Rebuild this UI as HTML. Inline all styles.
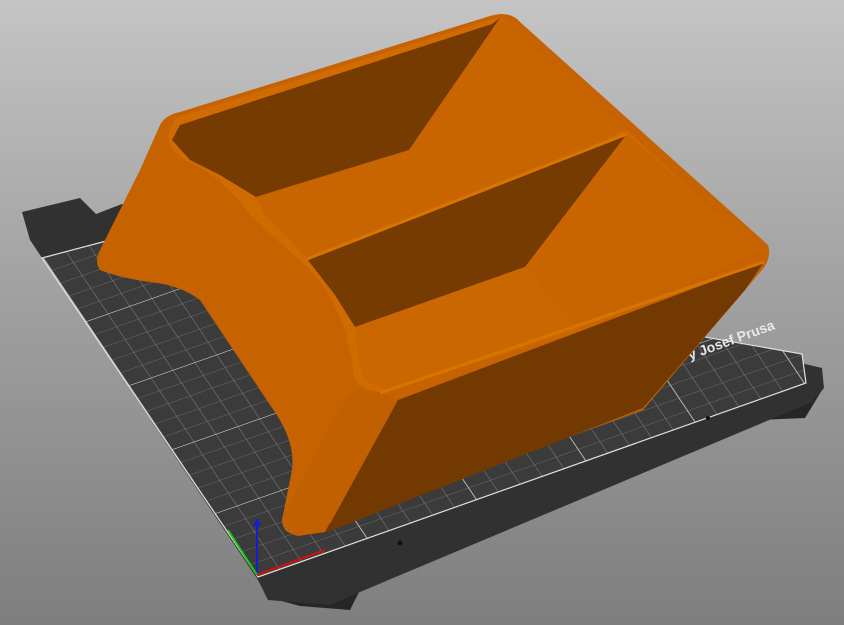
<!DOCTYPE html>
<html><head><meta charset="utf-8"><style>
html,body{margin:0;padding:0;width:844px;height:625px;overflow:hidden;}
body{background:linear-gradient(#c4c4c4,#a2a2a2 45%,#7e7e7e);}
svg{display:block}
</style></head><body>
<svg width="844" height="625" viewBox="0 0 844 625" xmlns="http://www.w3.org/2000/svg">
<defs>
<pattern id="g" width="10" height="10" patternUnits="userSpaceOnUse" patternTransform="matrix(2.19,-0.77,-0.86,-1.28,258,578)">
<rect width="10" height="10" fill="#3b3b3b"/>
<path d="M0 0H10M0 0V10" stroke="#7a7a7a" stroke-width="0.5" fill="none"/>
</pattern>
<pattern id="g2" width="50" height="50" patternUnits="userSpaceOnUse" patternTransform="matrix(2.19,-0.77,-0.86,-1.28,258,578)">
<path d="M0 0H50M0 0V50" stroke="#dcdcdc" stroke-width="0.6" fill="none"/>
</pattern>
</defs>
<polygon points="258,575 270,598 300,606 350,610 360,590" fill="#262626"/>
<polygon points="740,400 760,420 805,418 822,390 800,380" fill="#262626"/>
<polygon points="22,212 80,198 96,214 122,204 822,368 824,388 812,402 360,592 330,605 268,600 258,580 30,240" fill="#313131"/>
<polygon points="42,258 125,236 802,354 806,383 258,577" fill="url(#g)"/>
<polygon points="42,258 125,236 802,354 806,383 258,577" fill="url(#g2)"/>
<polygon points="42,258 125,236 802,354 806,383 258,577" fill="none" stroke="#e0e0e0" stroke-width="1.2"/>
<text x="690" y="360" font-family="Liberation Sans, sans-serif" font-weight="bold" font-size="14" fill="#e8e8e8" transform="rotate(-20 690 360)">y Josef Prusa</text>
<text x="690" y="343" font-family="Liberation Sans, sans-serif" font-weight="bold" font-size="14" fill="#e06a10" transform="rotate(-20 690 343)">K4</text>
<circle cx="400" cy="543" r="2.5" fill="#111"/>
<circle cx="708" cy="418" r="2" fill="#111"/>
<line x1="257" y1="575" x2="257" y2="522" stroke="#1020d0" stroke-width="2"/>
<polygon points="253,526 261,526 257,518" fill="#1020d0"/>
<line x1="257" y1="575" x2="228" y2="530" stroke="#20c020" stroke-width="2"/>
<line x1="257" y1="575" x2="325" y2="550" stroke="#d01010" stroke-width="2"/>
<path d="M160,125 Q165,115 180,112 L490,16 Q510,10 520,22 L768,245 Q772,258 762,270 L745,290 L643,410 L300,534 Q283,536 282,520 L292,470 Q296,440 270,405 L200,300 Q180,285 150,282 Q120,278 100,270 Q94,262 100,250 L140,170 Z" fill="#c66300"/>
<path d="M362,385 Q345,398 330,425 L285,512 Q280,532 298,536 L325,532 L398,400 Z" fill="#c06000"/>
<path d="M398,400 L764,262 L745,290 L643,408 L325,533 Z" fill="#723a00"/>
<path d="M175,118 L490,20 Q505,15 512,26 L758,250 L400,388 Q375,397 360,385 Q352,378 352,360 L345,330 Q330,290 310,270 L250,215 Q225,180 195,165 Q170,155 168,135 Z" fill="#d06b00"/>
<polygon points="180,125 492,24 500,18 409,150 256,197 220,175 190,160 172,140" fill="#763b00"/>
<polygon points="500,18 512,26 627,130 463,203 409,150" fill="#c86500"/>
<polygon points="256,197 409,150 463,203 307,259 290,240 265,215" fill="#c96500"/>
<polygon points="307,259 627,134 525,267 355,327 335,295" fill="#763b00"/>
<polyline points="307,259 627,134" stroke="#d87400" stroke-width="3" fill="none"/>
<polygon points="627,134 760,250 581,331 525,267" fill="#c96500"/>
<polygon points="355,327 525,267 581,331 385,390 365,380 358,360" fill="#cb6700"/>
<path d="M380,393 L764,262" stroke="#d87400" stroke-width="3" fill="none"/>
</svg>
</body></html>
